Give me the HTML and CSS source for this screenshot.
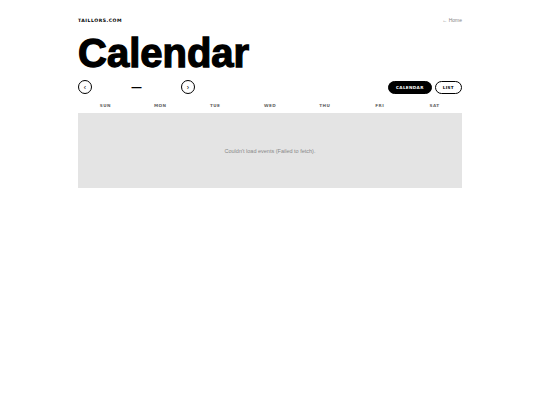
FILE: index.html
```html
<!DOCTYPE html>
<html lang="en">
<head>
    <meta charset="UTF-8">
    <meta name="viewport" content="width=device-width, initial-scale=1.0">
    <title>Calendar</title>
    <link rel="stylesheet" href="styles.css">
</head>
<body>
    <div class="container">
        <header class="top">
            <a class="brand" href="#">TAILLORS.COM</a>
            <a class="home" href="#">&larr; Home</a>
        </header>

        <h1>Calendar</h1>

        <div class="toolbar">
            <div class="month-nav">
                <button class="circle-btn">&lsaquo;</button>
                <span class="month-label">&mdash;</span>
                <button class="circle-btn">&rsaquo;</button>
            </div>
            <div class="view-toggle">
                <button class="pill active">CALENDAR</button>
                <button class="pill">LIST</button>
            </div>
        </div>

        <div class="weekdays">
            <span>SUN</span>
            <span>MON</span>
            <span>TUE</span>
            <span>WED</span>
            <span>THU</span>
            <span>FRI</span>
            <span>SAT</span>
        </div>

        <div class="grid">
            <p class="empty">Couldn't load events (Failed to fetch).</p>
        </div>
    </div>
</body>
</html>
```

FILE: styles.css
```css
* {
    margin: 0;
    padding: 0;
    box-sizing: border-box;
}

body {
    font-family: 'Liberation Sans', Arial, sans-serif;
    background-color: #fff;
    color: #000;
}

.container {
    max-width: 384px;
    margin: 0 auto;
    padding-top: 16px;
}

.top {
    display: flex;
    justify-content: space-between;
    align-items: center;
    height: 8px;
}

.brand {
    font-family: 'DejaVu Sans', sans-serif;
    font-size: 4.6px;
    font-weight: bold;
    letter-spacing: 0.5px;
    color: #000;
    text-decoration: none;
}

.home {
    font-size: 5px;
    color: #888;
    text-decoration: none;
}

h1 {
    font-size: 40px;
    line-height: 40px;
    font-weight: 900;
    -webkit-text-stroke: 1.3px #000;
    margin-top: 9px;
}

.toolbar {
    display: flex;
    justify-content: space-between;
    align-items: center;
    margin-top: 7px;
    height: 14px;
}

.month-nav {
    display: flex;
    align-items: center;
}

.circle-btn {
    width: 14px;
    height: 14px;
    border: 1px solid #000;
    border-radius: 50%;
    background: #fff;
    font-family: inherit;
    font-size: 7px;
    line-height: 11px;
    color: #000;
    cursor: pointer;
}

.month-label {
    width: 89px;
    text-align: center;
    font-size: 10px;
    font-weight: bold;
    line-height: 14px;
    padding-top: 2px;
}

.view-toggle {
    display: flex;
    gap: 3px;
}

.pill {
    height: 13px;
    padding: 0 7px;
    border: 1px solid #000;
    border-radius: 7px;
    background: #fff;
    font-family: 'DejaVu Sans', sans-serif;
    font-size: 4.2px;
    font-weight: bold;
    letter-spacing: 0.3px;
    color: #000;
    cursor: pointer;
}

.pill.active {
    background: #000;
    color: #fff;
}

.weekdays {
    display: grid;
    grid-template-columns: repeat(7, 1fr);
    text-align: center;
    font-family: 'DejaVu Sans', sans-serif;
    font-size: 4.2px;
    font-weight: bold;
    letter-spacing: 0.4px;
    color: #666;
    padding: 9px 0 4px;
    line-height: 6px;
}

.grid {
    height: 75px;
    background: #e4e4e4;
    display: flex;
    align-items: center;
    justify-content: center;
}

.empty {
    font-size: 5.5px;
    color: #888;
}
```
